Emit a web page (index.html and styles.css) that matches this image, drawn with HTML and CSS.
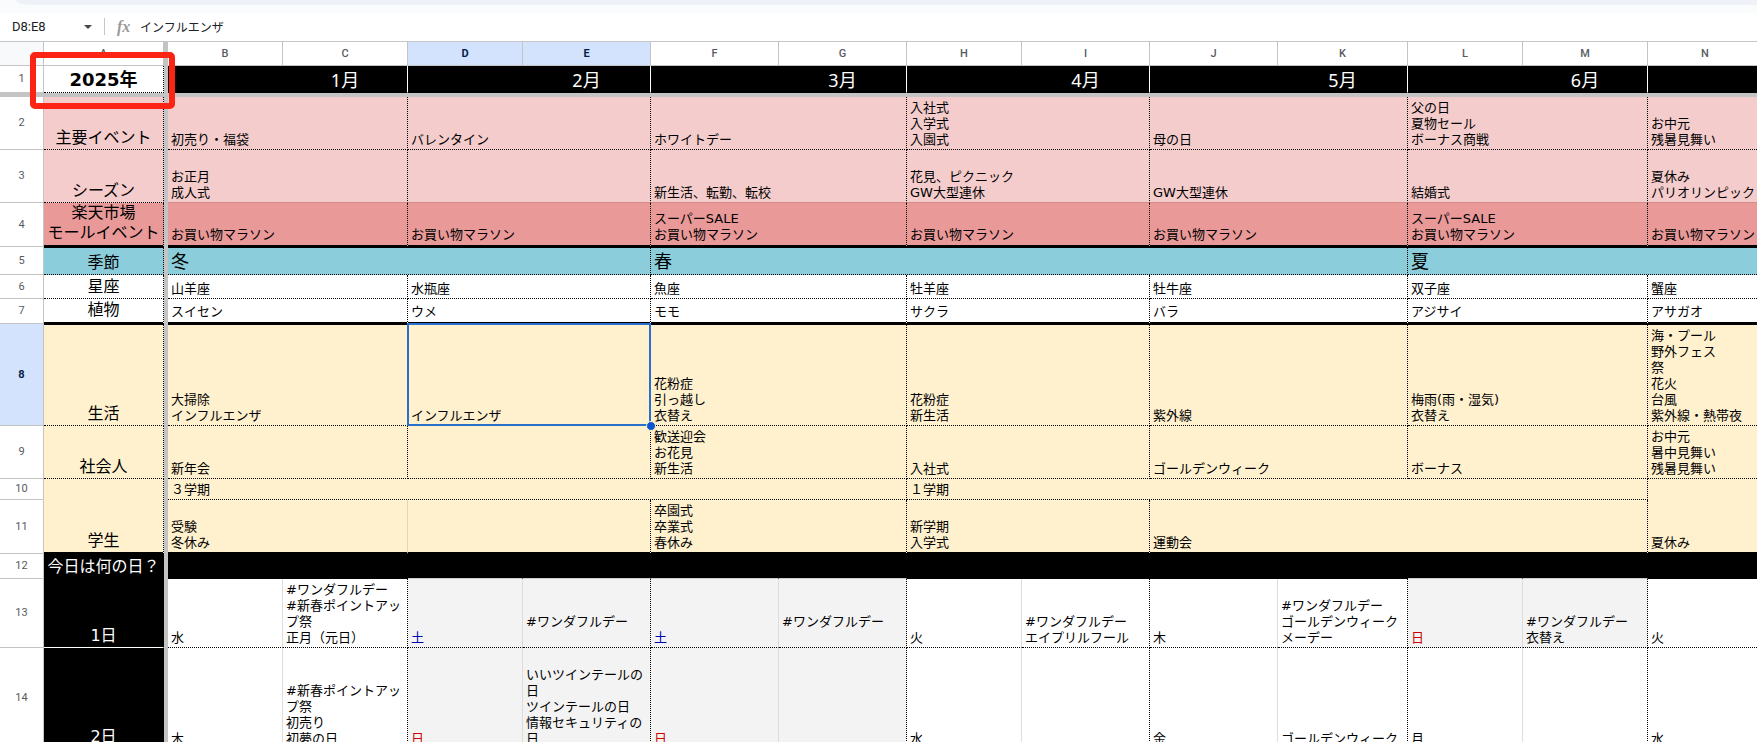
FILE: index.html
```html
<!DOCTYPE html>
<html lang="ja">
<head>
    <meta charset="UTF-8">
    <title>販促カレンダー 2025年</title>
    <link rel="stylesheet" href="styles.css">
</head>
<body>

<div class="toolbar-edge"><div class="toolbar-pill"></div></div>

<div class="formula-bar">
    <input class="name-box" type="text" value="D8:E8" aria-label="名前ボックス">
    <button class="name-menu" aria-label="名前付き範囲"><svg width="8" height="4" viewBox="0 0 8 4"><path d="M0 0h8L4 4z" fill="#444746"/></svg></button>
    <span class="divider"></span>
    <label class="fx" for="formula">fx</label>
    <input class="formula" id="formula" type="text" value="インフルエンザ">
</div>

<div class="sheet">
<table>
    <colgroup>
        <col class="w-head"><col class="w-a"><col class="w-freeze">
        <col class="w-115"><col class="w-125">
        <col class="w-115"><col class="w-128">
        <col class="w-128"><col class="w-128">
        <col class="w-115"><col class="w-128">
        <col class="w-128"><col class="w-130">
        <col class="w-115"><col class="w-125">
        <col class="w-115">
    </colgroup>
    <tbody>
        <tr class="letters">
            <th class="corner"></th>
            <th scope="col">A</th>
            <td class="freeze" rowspan="16"></td>
            <th scope="col">B</th>
            <th scope="col">C</th>
            <th scope="col" class="active">D</th>
            <th scope="col" class="active">E</th>
            <th scope="col">F</th>
            <th scope="col">G</th>
            <th scope="col">H</th>
            <th scope="col">I</th>
            <th scope="col">J</th>
            <th scope="col">K</th>
            <th scope="col">L</th>
            <th scope="col">M</th>
            <th scope="col">N</th>
        </tr>
        <tr class="r1 months">
            <th scope="row">1</th>
            <td class="label year">2025年</td>
            <td></td><td class="end">1月</td>
            <td></td><td class="end">2月</td>
            <td></td><td class="end">3月</td>
            <td></td><td class="end">4月</td>
            <td></td><td class="end">5月</td>
            <td></td><td class="end">6月</td>
            <td></td>
        </tr>
        <tr class="freeze-row">
            <td class="freeze" colspan="2"></td>
            <td class="freeze" colspan="13"></td>
        </tr>
        <tr class="r2 pink">
            <th scope="row">2</th>
            <td class="label">主要イベント</td>
            <td colspan="2">初売り・福袋</td>
            <td colspan="2">バレンタイン</td>
            <td colspan="2">ホワイトデー</td>
            <td colspan="2">入社式<br>入学式<br>入園式</td>
            <td colspan="2">母の日</td>
            <td colspan="2">父の日<br>夏物セール<br>ボーナス商戦</td>
            <td>お中元<br>残暑見舞い</td>
        </tr>
        <tr class="r3 pink season">
            <th scope="row">3</th>
            <td class="label">シーズン</td>
            <td colspan="2">お正月<br>成人式</td>
            <td colspan="2"></td>
            <td colspan="2">新生活、転勤、転校</td>
            <td colspan="2">花見、ピクニック<br>GW大型連休</td>
            <td colspan="2">GW大型連休</td>
            <td colspan="2">結婚式</td>
            <td>夏休み<br>パリオリンピック</td>
        </tr>
        <tr class="r4 red thick">
            <th scope="row">4</th>
            <td class="label">楽天市場<br>モールイベント</td>
            <td colspan="2">お買い物マラソン</td>
            <td colspan="2">お買い物マラソン</td>
            <td colspan="2">スーパーSALE<br>お買い物マラソン</td>
            <td colspan="2">お買い物マラソン</td>
            <td colspan="2">お買い物マラソン</td>
            <td colspan="2">スーパーSALE<br>お買い物マラソン</td>
            <td>お買い物マラソン</td>
        </tr>
        <tr class="r5 teal after-thick">
            <th scope="row">5</th>
            <td class="label">季節</td>
            <td colspan="4" class="big">冬</td>
            <td colspan="6" class="big">春</td>
            <td colspan="3" class="big">夏</td>
        </tr>
        <tr class="r6">
            <th scope="row">6</th>
            <td class="label">星座</td>
            <td colspan="2">山羊座</td>
            <td colspan="2">水瓶座</td>
            <td colspan="2">魚座</td>
            <td colspan="2">牡羊座</td>
            <td colspan="2">牡牛座</td>
            <td colspan="2">双子座</td>
            <td>蟹座</td>
        </tr>
        <tr class="r7 thick">
            <th scope="row">7</th>
            <td class="label">植物</td>
            <td colspan="2">スイセン</td>
            <td colspan="2">ウメ</td>
            <td colspan="2">モモ</td>
            <td colspan="2">サクラ</td>
            <td colspan="2">バラ</td>
            <td colspan="2">アジサイ</td>
            <td>アサガオ</td>
        </tr>
        <tr class="r8 yellow after-thick">
            <th scope="row" class="active">8</th>
            <td class="label">生活</td>
            <td colspan="2">大掃除<br>インフルエンザ</td>
            <td colspan="2" class="selected">インフルエンザ<span class="handle"></span></td>
            <td colspan="2">花粉症<br>引っ越し<br>衣替え</td>
            <td colspan="2">花粉症<br>新生活</td>
            <td colspan="2">紫外線</td>
            <td colspan="2">梅雨(雨・湿気)<br>衣替え</td>
            <td>海・プール<br>野外フェス<br>祭<br>花火<br>台風<br>紫外線・熱帯夜</td>
        </tr>
        <tr class="r9 yellow">
            <th scope="row">9</th>
            <td class="label">社会人</td>
            <td colspan="2">新年会</td>
            <td colspan="2"></td>
            <td colspan="2">歓送迎会<br>お花見<br>新生活</td>
            <td colspan="2">入社式</td>
            <td colspan="2">ゴールデンウィーク</td>
            <td colspan="2">ボーナス</td>
            <td>お中元<br>暑中見舞い<br>残暑見舞い</td>
        </tr>
        <tr class="r10 yellow">
            <th scope="row">10</th>
            <td class="label to-black" rowspan="2">学生</td>
            <td colspan="6">３学期</td>
            <td colspan="6">１学期</td>
            <td class="to-black" rowspan="2">夏休み</td>
        </tr>
        <tr class="r11 yellow to-black-row">
            <th scope="row">11</th>
            <td colspan="2" class="plain">受験<br>冬休み</td>
            <td colspan="2"></td>
            <td colspan="2">卒園式<br>卒業式<br>春休み</td>
            <td colspan="2">新学期<br>入学式</td>
            <td colspan="4">運動会</td>
        </tr>
        <tr class="r12 black">
            <th scope="row">12</th>
            <td class="label">今日は何の日？</td>
            <td></td><td></td>
            <td class="light"></td><td class="light"></td>
            <td class="light"></td><td class="light"></td>
            <td></td><td></td>
            <td></td><td></td>
            <td class="light"></td><td class="light"></td>
            <td></td>
        </tr>
        <tr class="r13 day">
            <th scope="row">13</th>
            <td class="label">1日</td>
            <td class="plain">水</td>
            <td>#ワンダフルデー<br>#新春ポイントアップ祭<br>正月（元日）</td>
            <td class="plain off sat">土</td>
            <td class="off">#ワンダフルデー<br>&nbsp;</td>
            <td class="plain off sat">土</td>
            <td class="off">#ワンダフルデー<br>&nbsp;</td>
            <td class="plain">火</td>
            <td>#ワンダフルデー<br>エイプリルフール</td>
            <td class="plain">木</td>
            <td>#ワンダフルデー<br>ゴールデンウィーク<br>メーデー</td>
            <td class="plain off sun">日</td>
            <td class="off">#ワンダフルデー<br>衣替え</td>
            <td class="plain">火</td>
        </tr>
        <tr class="r14 day">
            <th scope="row">14</th>
            <td class="label">2日</td>
            <td class="plain">木</td>
            <td>#新春ポイントアップ祭<br>初売り<br>初夢の日</td>
            <td class="plain off sun">日</td>
            <td class="off">いいツインテールの日<br>ツインテールの日<br>情報セキュリティの日</td>
            <td class="plain off sun">日</td>
            <td class="off"></td>
            <td class="plain">水</td>
            <td></td>
            <td class="plain">金</td>
            <td>ゴールデンウィーク</td>
            <td class="plain">月</td>
            <td></td>
            <td class="plain">水</td>
        </tr>
    </tbody>
</table>
</div>

</body>
</html>
```

FILE: styles.css
```css
* {
    box-sizing: border-box;
}
body {
    margin: 0;
    height: 100vh;
    overflow: hidden;
    display: flex;
    flex-direction: column;
    background-color: white;
    font-family: "DejaVu Sans", "Noto Sans CJK JP", sans-serif;
    font-size: 13px;
    line-height: 16px;
    color: black;
}

/* toolbar and formula bar */
.toolbar-edge {
    flex: none;
    height: 13px;
    padding-left: 16px;
    background-color: #f9fbfd;
}
.toolbar-pill {
    height: 5px;
    background-color: #eef2f8;
    border-bottom-left-radius: 16px 5px;
}
.formula-bar {
    flex: none;
    display: flex;
    align-items: center;
    height: 29px;
    padding: 0 0 1px 12px;
    border-bottom: 1px solid #c4c7c5;
}
.formula-bar input {
    border: none;
    outline: none;
    padding: 0;
    background: none;
    color: #202124;
}
.name-box {
    width: 64px;
    font-family: Roboto, sans-serif;
    font-size: 13px;
}
.name-menu {
    display: flex;
    align-items: center;
    justify-content: center;
    width: 24px;
    height: 20px;
    padding: 0;
    border: none;
    background: none;
    cursor: pointer;
}
.divider {
    width: 1px;
    height: 17px;
    margin-left: 4px;
    background-color: #c4c7c5;
}
.fx {
    width: 35px;
    padding-left: 12px;
    font-family: "Liberation Serif", serif;
    font-size: 16px;
    font-style: italic;
    font-weight: bold;
    color: #9a9a9a;
}
.formula {
    flex: 1;
    font-family: Roboto, "Noto Sans CJK JP", sans-serif;
    font-size: 12px;
}

/* grid */
.sheet {
    flex: 1;
    overflow: hidden;
}
table {
    table-layout: fixed;
    width: 100%;
    min-width: 1763px;
    border-collapse: separate;
    border-spacing: 0;
}
.w-head { width: 44px; }
.w-a { width: 120px; }
.w-freeze { width: 4px; }
.w-115 { width: 115px; }
.w-125 { width: 125px; }
.w-128 { width: 128px; }
.w-130 { width: 130px; }

.letters { height: 24px; }
.r1 { height: 27px; }
.freeze-row { height: 4px; }
.r2, .r3, .r9 { height: 53px; }
.r4 { height: 44px; }
.r5 { height: 28px; }
.r6 { height: 24px; }
.r7, .r12 { height: 25px; }
.r8 { height: 102px; }
.r10 { height: 21px; }
.r11 { height: 54px; }
.r13 { height: 69px; }
.r14 { height: 101px; }

th {
    padding: 0;
    border-right: 1px solid #c4c4c4;
    border-bottom: 1px solid #c4c4c4;
    font-family: Roboto, sans-serif;
    font-size: 11px;
    font-weight: 500;
    color: #575b5f;
    background-color: white;
}
th[scope="row"] {
    font-weight: 400;
}
th.corner {
    background-color: #f8f9fa;
}
th.active,
th.active[scope="row"] {
    background-color: #d3e3fd;
    color: #041e49;
    font-weight: bold;
}
td {
    padding: 0 3px 1px;
    vertical-align: bottom;
    border-right: 1px dotted black;
    border-bottom: 1px dotted black;
}
td.freeze {
    padding: 0;
    border: none;
    background-color: #c4c4c4;
}
td.label {
    text-align: center;
    font-size: 16px;
    line-height: 20px;
    white-space: nowrap;
}

.months td {
    padding-bottom: 0;
    border-right: 1px solid black;
    border-bottom: 1px solid black;
    background-color: black;
    color: white;
    font-family: "Noto Sans", "Noto Sans CJK JP", sans-serif;
    font-size: 18px;
    line-height: 24px;
    text-align: center;
}
.months td.end {
    border-right-color: white;
}
.months td.year {
    position: relative;
    border-right-style: dotted;
    border-bottom-style: dotted;
    background-color: white;
    color: black;
    font-family: "DejaVu Sans", "Noto Sans CJK JP", sans-serif;
    font-size: 18px;
    font-weight: bold;
    line-height: 24px;
}
/* red frame round the year */
.year::after {
    content: "";
    position: absolute;
    inset: -14px -12px -17px -14px;
    border: 6px solid #fc2414;
    border-radius: 5px;
    z-index: 2;
}

.pink td { background-color: #f4cccc; }
.red td { background-color: #e89998; }
.teal td { background-color: #8ccddb; }
.yellow td { background-color: #fff0ce; }
.season td:not(.label) {
    border-bottom: 1px solid #d58a8a;
}
.thick td {
    padding-bottom: 2px;
    border-bottom: 2px solid black;
}
.after-thick td {
    border-top: 1px solid black;
}
td.big {
    font-size: 18px;
    line-height: 24px;
    padding-bottom: 0;
}
td.to-black,
.to-black-row td {
    border-bottom: 2px solid black;
}
.yellow td.plain {
    border-right: 1px solid #e3d6b8;
}

td.selected {
    position: relative;
}
.selected::after {
    content: "";
    position: absolute;
    inset: -2px -1px -1px -1px;
    border: 2px solid #2a6fc9;
}
.handle {
    position: absolute;
    right: -6px;
    bottom: -6px;
    width: 10px;
    height: 10px;
    border: 1px solid #fff0ce;
    border-radius: 50%;
    background-color: #0b57d0;
    z-index: 1;
}

.black td,
.day td.label {
    border-right: 1px solid black;
    border-bottom: 1px solid black;
    background-color: black;
    color: white;
}
.black td.light {
    border-bottom-color: #cccccc;
}
.day td.label {
    border-bottom-color: white;
}
.day td.plain {
    border-right: 1px solid #dddddd;
}
.day td.off {
    background-color: #f3f3f3;
}
.day td.sat { color: #0000b0; }
.day td.sun { color: #cc0000; }
```
